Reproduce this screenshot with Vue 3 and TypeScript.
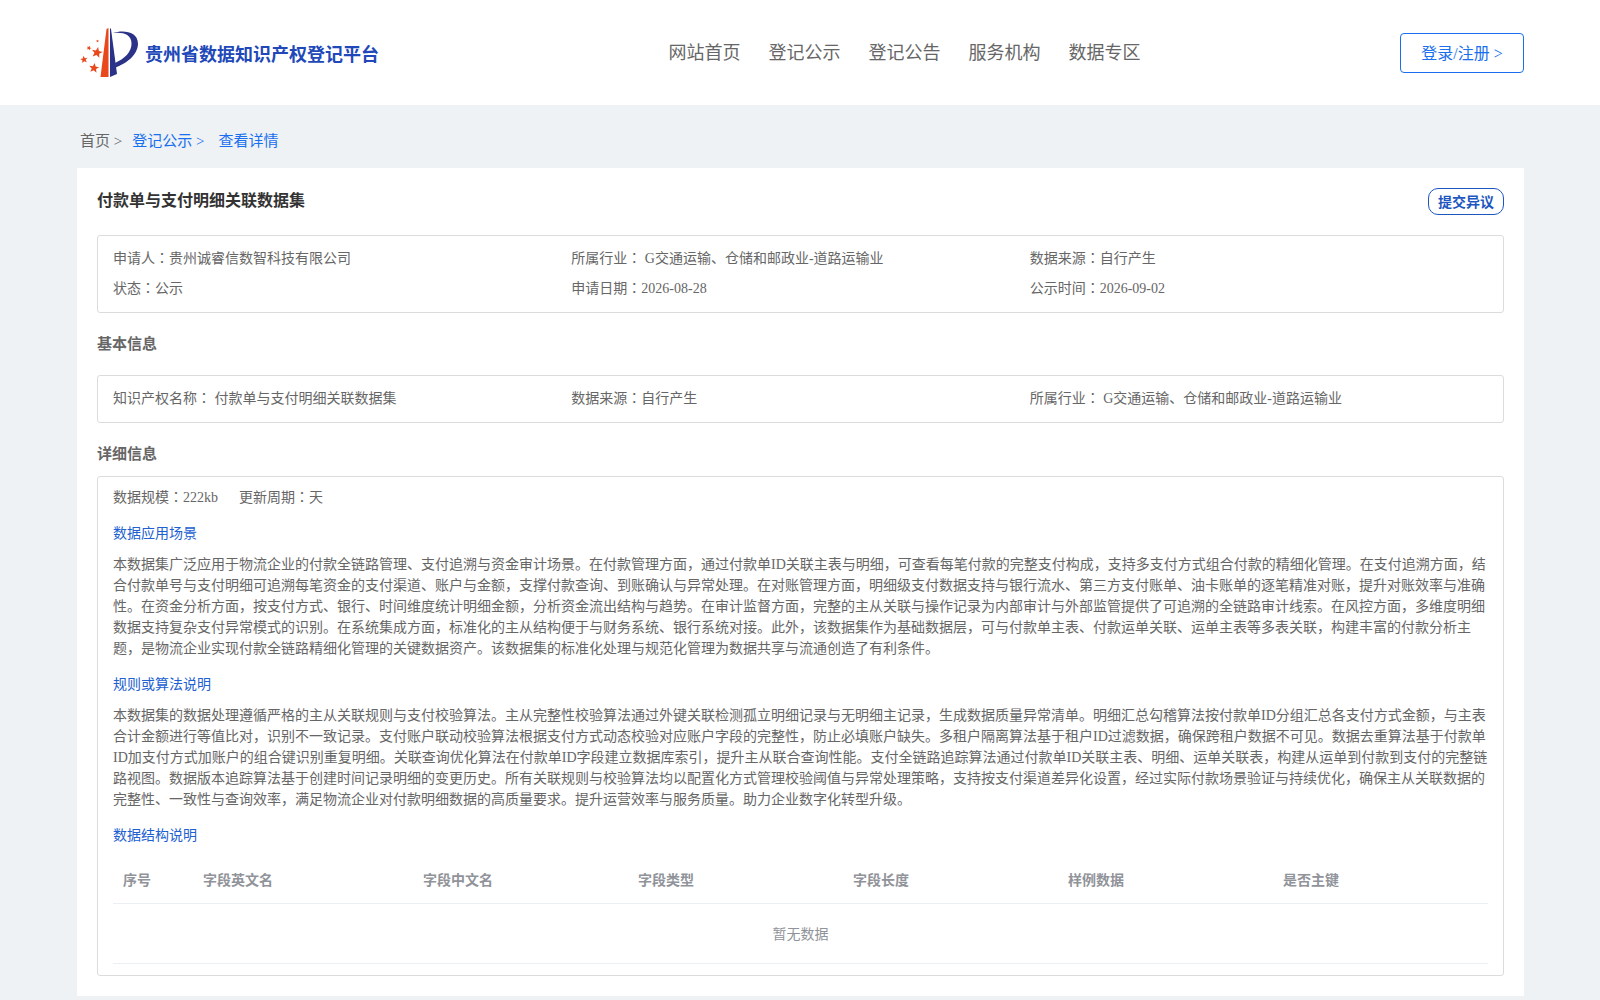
<script setup lang="ts">
interface Field {
  label: string
  value: string
}

const navItems: string[] = ['网站首页', '登记公示', '登记公告', '服务机构', '数据专区']

const title = '付款单与支付明细关联数据集'

const summary: Field[] = [
  { label: '申请人', value: '贵州诚睿信数智科技有限公司' },
  { label: '所属行业', value: ' G交通运输、仓储和邮政业-道路运输业' },
  { label: '数据来源', value: '自行产生' },
  { label: '状态', value: '公示' },
  { label: '申请日期', value: '2026-08-28' },
  { label: '公示时间', value: '2026-09-02' },
]

const basics: Field[] = [
  { label: '知识产权名称', value: ' 付款单与支付明细关联数据集' },
  { label: '数据来源', value: '自行产生' },
  { label: '所属行业', value: ' G交通运输、仓储和邮政业-道路运输业' },
]

const details: Field[] = [
  { label: '数据规模', value: '222kb' },
  { label: '更新周期', value: '天' },
]

const articles = [
  {
    heading: '数据应用场景',
    body: '本数据集广泛应用于物流企业的付款全链路管理、支付追溯与资金审计场景。在付款管理方面，通过付款单ID关联主表与明细，可查看每笔付款的完整支付构成，支持多支付方式组合付款的精细化管理。在支付追溯方面，结合付款单号与支付明细可追溯每笔资金的支付渠道、账户与金额，支撑付款查询、到账确认与异常处理。在对账管理方面，明细级支付数据支持与银行流水、第三方支付账单、油卡账单的逐笔精准对账，提升对账效率与准确性。在资金分析方面，按支付方式、银行、时间维度统计明细金额，分析资金流出结构与趋势。在审计监督方面，完整的主从关联与操作记录为内部审计与外部监管提供了可追溯的全链路审计线索。在风控方面，多维度明细数据支持复杂支付异常模式的识别。在系统集成方面，标准化的主从结构便于与财务系统、银行系统对接。此外，该数据集作为基础数据层，可与付款单主表、付款运单关联、运单主表等多表关联，构建丰富的付款分析主题，是物流企业实现付款全链路精细化管理的关键数据资产。该数据集的标准化处理与规范化管理为数据共享与流通创造了有利条件。',
  },
  {
    heading: '规则或算法说明',
    body: '本数据集的数据处理遵循严格的主从关联规则与支付校验算法。主从完整性校验算法通过外键关联检测孤立明细记录与无明细主记录，生成数据质量异常清单。明细汇总勾稽算法按付款单ID分组汇总各支付方式金额，与主表合计金额进行等值比对，识别不一致记录。支付账户联动校验算法根据支付方式动态校验对应账户字段的完整性，防止必填账户缺失。多租户隔离算法基于租户ID过滤数据，确保跨租户数据不可见。数据去重算法基于付款单ID加支付方式加账户的组合键识别重复明细。关联查询优化算法在付款单ID字段建立数据库索引，提升主从联合查询性能。支付全链路追踪算法通过付款单ID关联主表、明细、运单关联表，构建从运单到付款到支付的完整链路视图。数据版本追踪算法基于创建时间记录明细的变更历史。所有关联规则与校验算法均以配置化方式管理校验阈值与异常处理策略，支持按支付渠道差异化设置，经过实际付款场景验证与持续优化，确保主从关联数据的完整性、一致性与查询效率，满足物流企业对付款明细数据的高质量要求。提升运营效率与服务质量。助力企业数字化转型升级。',
  },
]

const columns: string[] = ['序号', '字段英文名', '字段中文名', '字段类型', '字段长度', '样例数据', '是否主键']
</script>

<template>
  <div class="page">
    <header class="header">
      <a class="brand" href="#">
        <svg class="logo" viewBox="0 0 58 50" aria-hidden="true">
          <defs>
            <path id="star" d="M0-5 1.4-1.6 5-1.5 2.2.8 3.1 4.3 0 2.3-3.1 4.3-2.2.8-5-1.500-1.4-1.6Z" />
          </defs>
          <g fill="#e8481c">
            <path d="M26.500 1 28.500 0 28.500 49 20.500 49Z" />
            <use href="#star" transform="translate(17 24.500) scale(1.1) rotate(12)" />
            <use href="#star" transform="translate(14 40) rotate(8)" />
            <use href="#star" transform="translate(4 31.500) scale(.75) rotate(-8)" />
            <use href="#star" transform="translate(9 20) scale(.5) rotate(20)" />
            <use href="#star" transform="translate(17.500 13) scale(.3)" />
          </g>
          <g fill="#2b3388">
            <path d="M30 0 31 1 37 46 30 49Z" />
            <path d="M33 5C43 2 58 3 58 16 57.500 28 45 36 35.500 39.500L35 35C44 31 52 24 51.500 15 51 6 43 4 33 5Z" />
          </g>
        </svg>
        <span class="brand-name">贵州省数据知识产权登记平台</span>
      </a>
      <nav class="nav">
        <a v-for="item in navItems" :key="item" href="#">{{ item }}</a>
      </nav>
      <button class="login" type="button">登录/注册 &gt;</button>
    </header>

    <div class="content">
      <nav class="crumbs" aria-label="面包屑">
        <a class="home" href="#">首页 &gt;</a>
        <a href="#">登记公示 &gt;</a>
        <a class="current" href="#">查看详情</a>
      </nav>

      <main class="card">
        <div class="title-row">
          <h1>{{ title }}</h1>
          <button class="objection" type="button">提交异议</button>
        </div>

        <section class="box grid">
          <div v-for="field in summary" :key="field.label">{{ field.label }}<span class="colon">：</span>{{ field.value }}</div>
        </section>

        <h2 class="basic-title">基本信息</h2>
        <section class="box grid">
          <div v-for="field in basics" :key="field.label">{{ field.label }}<span class="colon">：</span>{{ field.value }}</div>
        </section>

        <h2 class="detail-title">详细信息</h2>
        <section class="box detail">
          <div class="meta">
            <div v-for="field in details" :key="field.label">{{ field.label }}<span class="colon">：</span>{{ field.value }}</div>
          </div>
          <template v-for="article in articles" :key="article.heading">
            <h3>{{ article.heading }}</h3>
            <p>{{ article.body }}</p>
          </template>
          <h3>数据结构说明</h3>
          <table>
            <colgroup>
              <col class="col-index" />
              <col class="col-name" />
              <col v-for="n in 5" :key="n" />
            </colgroup>
            <thead>
              <tr>
                <th v-for="column in columns" :key="column" scope="col">{{ column }}</th>
              </tr>
            </thead>
            <tbody>
              <tr>
                <td :colspan="columns.length">暂无数据</td>
              </tr>
            </tbody>
          </table>
        </section>
      </main>
    </div>
  </div>
</template>

<style>
body {
  margin: 0;
  background: #eef2f5;
}
</style>

<style scoped>
.page {
  min-height: 100vh;
  background: #eef2f5;
  color: #666;
  font-family: 'Liberation Serif', 'Noto Sans CJK SC', serif;
  font-size: 14px;
}

.page * {
  box-sizing: border-box;
}

a {
  color: inherit;
  text-decoration: none;
}

button {
  background: #fff;
  font-family: inherit;
  cursor: pointer;
}

h1,
h2,
h3,
p {
  margin: 0;
}

.header {
  display: flex;
  align-items: center;
  justify-content: space-between;
  height: 105px;
  padding: 0 76px 0 80px;
  background: #fff;
}

.brand {
  display: flex;
  align-items: center;
  gap: 7px;
  color: #2148b8;
  font-size: 18px;
  font-weight: bold;
  line-height: 24px;
}

.brand-name {
  padding-top: 4px;
}

.logo {
  width: 58px;
  height: 50px;
}

.nav {
  display: flex;
  gap: 28px;
  padding-left: 30px;
  font-size: 18px;
  line-height: 24px;
}

.login {
  width: 124px;
  height: 40px;
  padding: 0 0 2px;
  border: 1px solid #1a6fee;
  border-radius: 4px;
  color: #1a6fee;
  font-size: 16px;
}

.content {
  padding: 0 76px 5px 77px;
}

.crumbs {
  display: flex;
  height: 63px;
  padding: 26px 0 0 3px;
  color: #1a6fee;
  font-size: 15px;
  line-height: 20px;
}

.crumbs .home {
  margin-right: 10px;
  color: #666;
}

.crumbs .current {
  margin-left: 14px;
}

.card {
  padding: 20px;
  background: #fff;
}

.title-row {
  display: flex;
  align-items: flex-start;
  justify-content: space-between;
  height: 47px;
}

h1 {
  color: #333;
  font-size: 16px;
  line-height: 26px;
}

.objection {
  width: 76px;
  height: 27px;
  padding: 0 0 2px;
  border: 1px solid #1d56c0;
  border-radius: 10px;
  color: #1d56c0;
  font-size: 14px;
  font-weight: bold;
}

.box {
  padding: 8px 15px;
  border: 1px solid #dcdcdc;
  border-radius: 3px;
}

.grid {
  display: grid;
  grid-template-columns: repeat(3, 1fr);
  line-height: 30px;
}

.colon {
  font-family: 'Noto Sans CJK TC', sans-serif;
  line-height: 1;
}

h2 {
  font-size: 15px;
  line-height: 20px;
}

.basic-title {
  padding: 21px 0;
}

.detail-title {
  padding: 21px 0 12px;
}

.detail {
  padding: 11px 15px;
}

.meta {
  display: flex;
  gap: 21px;
  line-height: 20px;
}

h3 {
  margin: 16px 0 10px;
  color: #2060d0;
  font-size: 14px;
  font-weight: normal;
  line-height: 20px;
}

p {
  line-height: 21px;
}

table {
  width: 100%;
  border-collapse: collapse;
  table-layout: fixed;
  color: #909399;
}

.col-index {
  width: 80px;
}

.col-name {
  width: 220px;
}

th {
  height: 47px;
  padding: 0 10px;
  border-bottom: 1px solid #ebeef5;
  text-align: left;
}

td {
  height: 60px;
  padding: 0;
  border-bottom: 1px solid #ebeef5;
  text-align: center;
}
</style>
